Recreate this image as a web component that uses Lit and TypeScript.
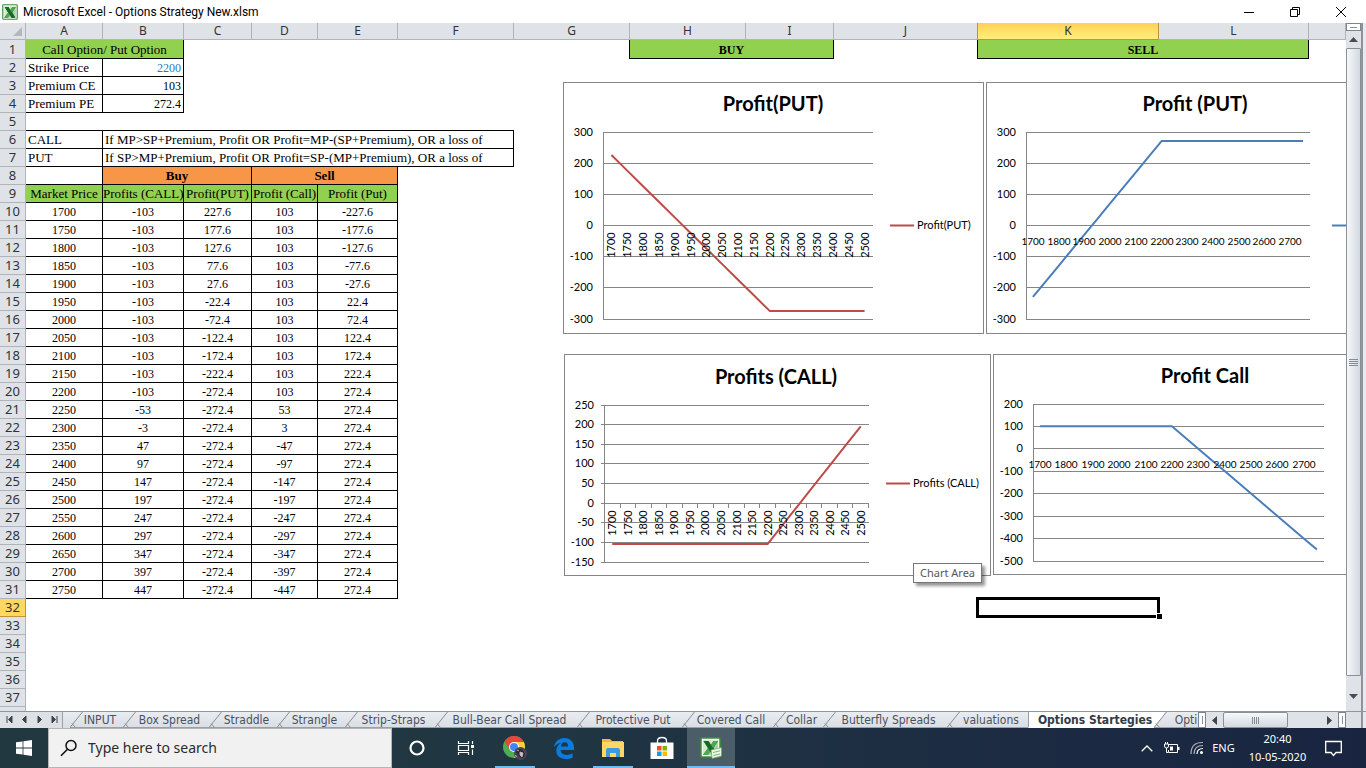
import { LitElement, html, svg, css, nothing, TemplateResult } from "lit";
import { customElement, property } from "lit/decorators.js";
import { classMap } from "lit/directives/class-map.js";

const COLUMNS: [string, number][] = [
  ["A", 77], ["B", 81], ["C", 68], ["D", 66], ["E", 80], ["F", 116], ["G", 116],
  ["H", 116], ["I", 88], ["J", 144], ["K", 181], ["L", 150], ["", 0],
];

const STRIKE = 2200;
const CE = 103;
const PE = 272.4;
const round = (n: number) => Math.round(n * 10) / 10;
const buyCall = (mp: number) => (mp > STRIKE ? mp - STRIKE - CE : -CE);
const buyPut = (mp: number) => (mp < STRIKE ? round(STRIKE - mp - PE) : -PE);
const sellPut = (mp: number) => (mp >= STRIKE ? PE : round(Math.abs(mp - STRIKE + PE)));
const range = (from: number, to: number, step: number) => {
  const out: number[] = [];
  for (let v = from; v <= to; v += step) out.push(v);
  return out;
};
const PRICES = range(1700, 2750, 50);

interface Cell {
  text?: string | number;
  span?: number;
  cls?: string;
  selected?: boolean;
}

function rowCells(n: number): Cell[] {
  switch (n) {
    case 1:
      return [
        { text: "Call Option/ Put Option", span: 2, cls: "box green center" },
        { span: 5, cls: "edge" },
        { text: "BUY", span: 2, cls: "box green center bold num" },
        { cls: "edge" },
        { text: "SELL", span: 2, cls: "box green center bold num" },
        {},
      ];
    case 2:
      return [{ text: "Strike Price", cls: "box" }, { text: STRIKE, cls: "box num right blue" }, { span: 11 }];
    case 3:
      return [{ text: "Premium CE", cls: "box" }, { text: CE, cls: "box num right" }, { span: 11 }];
    case 4:
      return [{ text: "Premium PE", cls: "box" }, { text: PE, cls: "box num right" }, { span: 11 }];
    case 5:
      return [{ span: 6, cls: "under" }, { span: 7 }];
    case 6:
      return [
        { text: "CALL", cls: "box" },
        { text: "If MP>SP+Premium, Profit OR Profit=MP-(SP+Premium), OR a loss of", span: 5, cls: "box" },
        { span: 7 },
      ];
    case 7:
      return [
        { text: "PUT", cls: "box" },
        { text: "If SP>MP+Premium, Profit OR Profit=SP-(MP+Premium), OR a loss of", span: 5, cls: "box" },
        { span: 7 },
      ];
    case 8:
      return [
        { cls: "box" },
        { text: "Buy", span: 2, cls: "box orange center bold" },
        { text: "Sell", span: 2, cls: "box orange center bold" },
        { span: 8 },
      ];
    case 9:
      return [
        ...["Market Price", "Profits (CALL)", "Profit(PUT)", "Profit (Call)", "Profit (Put)"].map((text) => ({
          text,
          cls: "box green center tight",
        })),
        { span: 8 },
      ];
    case 32:
      return [{ span: 10 }, { selected: true }, { span: 2 }];
  }
  if (n >= 10 && n <= 31) {
    const mp = PRICES[n - 10];
    const put = mp < 1950 ? -buyPut(mp) : sellPut(mp);
    return [
      ...[mp, buyCall(mp), buyPut(mp), -buyCall(mp), put].map((text) => ({ text, cls: "box num center" })),
      { span: 8 },
    ];
  }
  return [{ span: 13 }];
}

interface ChartSpec {
  id: string;
  title: string;
  titleX: number;
  titleY: number;
  w: number;
  h: number;
  plot: [number, number, number, number];
  max: number;
  min: number;
  step: number;
  prices: number[];
  labelEvery: number;
  labelY: number;
  rotate: boolean;
  ticks: boolean;
  color: string;
  legend?: string;
  legendX: number;
  legendY: number;
  value: (mp: number) => number;
}

const CHARTS: ChartSpec[] = [
  {
    id: "put-buy", title: "Profit(PUT)", titleX: 210, titleY: 29, w: 421, h: 252,
    plot: [40, 50, 269, 187], max: 300, min: -300, step: 100,
    prices: range(1700, 2500, 50), labelEvery: 1, labelY: 163, rotate: true, ticks: false,
    color: "#be4b48", legend: "Profit(PUT)", legendX: 327, legendY: 143, value: buyPut,
  },
  {
    id: "put-sell", title: "Profit (PUT)", titleX: 209, titleY: 29, w: 421, h: 252,
    plot: [40, 50, 283, 187], max: 300, min: -300, step: 100,
    prices: PRICES, labelEvery: 2, labelY: 163, rotate: false, ticks: false,
    color: "#4a7ebb", legendX: 346, legendY: 143, value: (mp) => -buyPut(mp),
  },
  {
    id: "call-buy", title: "Profits (CALL)", titleX: 212, titleY: 30, w: 427, h: 222,
    plot: [40, 51, 264, 157], max: 250, min: -150, step: 50,
    prices: range(1700, 2500, 50), labelEvery: 1, labelY: 169, rotate: true, ticks: true,
    color: "#be4b48", legend: "Profits (CALL)", legendX: 322, legendY: 129, value: buyCall,
  },
  {
    id: "call-sell", title: "Profit Call", titleX: 212, titleY: 29, w: 421, h: 221,
    plot: [40, 50, 290, 157], max: 200, min: -500, step: 100,
    prices: PRICES, labelEvery: 2, labelY: 114, rotate: false, ticks: false,
    color: "#4a7ebb", legendX: 360, legendY: 130, value: (mp) => -buyCall(mp),
  },
];

@customElement("profit-chart")
class ProfitChart extends LitElement {
  @property({ attribute: false }) spec!: ChartSpec;

  static styles = css`
    :host { display: block; background: #fff; }
    svg { display: block; font-family: Lato, "Liberation Sans", sans-serif; }
    .frame { fill: #fff; stroke: #868686; }
    .grid { stroke: #868686; shape-rendering: crispEdges; fill: none; }
    .line { fill: none; stroke-width: 2; stroke-linejoin: round; }
    .title { font-size: 20px; font-weight: 700; text-anchor: middle; }
    .label { font-size: 11px; }
    .small { font-size: 10px; }
    .end { text-anchor: end; }
    .mid { text-anchor: middle; }
  `;

  render() {
    const s = this.spec;
    const [px, py, pw, ph] = s.plot;
    const y = (v: number) => py + ((s.max - v) * ph) / (s.max - s.min);
    const slot = pw / s.prices.length;
    const x = (i: number) => px + slot * (i + 0.5) + 0.5;
    const points = s.prices.map((p, i) => `${x(i)},${y(s.value(p)) + 0.5}`).join(" ");
    return html`<svg width=${s.w} height=${s.h} role="img" aria-label=${s.title}>
      <rect class="frame" x="0.5" y="0.5" width=${s.w - 1} height=${s.h - 1}></rect>
      <text class="title" x=${s.titleX} y=${s.titleY}>${s.title}</text>
      ${range(s.min, s.max, s.step).map((v) => {
        const gy = Math.floor(y(v)) + 0.5;
        return svg`<path class="grid" d="M${px - (s.ticks ? 3 : 0)} ${gy}H${px + pw + 1}"></path>
          <text class="label end" x="30" y=${Math.floor(y(v)) + 4}>${v}</text>`;
      })}
      <path class="grid" d="M${px + 0.5} ${py}V${py + ph + 1}"></path>
      ${s.ticks
        ? s.prices.map((_, i) => svg`<path class="grid" d="M${Math.round(px + slot * (i + 1)) + 0.5} ${Math.floor(y(0))}v5"></path>`)
        : nothing}
      <polyline class="line" points=${points} stroke=${s.color}></polyline>
      ${s.prices.map((p, i) =>
        i % s.labelEvery
          ? nothing
          : s.rotate
            ? svg`<text class="label mid" transform="translate(${Math.round(x(i)) + 4} ${s.labelY}) rotate(-90)">${p}</text>`
            : svg`<text class="label small mid" x=${Math.round(x(i))} y=${s.labelY}>${p}</text>`,
      )}
      <path class="line" stroke=${s.color} d="M${s.legendX} ${s.legendY + 0.5}h24"></path>
      ${s.legend ? svg`<text class="label" x=${s.legendX + 27} y=${s.legendY + 4}>${s.legend}</text>` : nothing}
    </svg>`;
  }
}

const TABS: [string, number][] = [
  ["INPUT", 53], ["Box Spread", 86], ["Straddle", 68], ["Strangle", 68], ["Strip-Straps", 90],
  ["Bull-Bear Call Spread", 142], ["Protective Put", 105], ["Covered Call", 91], ["Collar", 50],
  ["Butterfly Spreads", 124], ["valuations", 81], ["Options Startegies", 126], ["Opti", 57],
];
const ACTIVE = "Options Startegies";

@customElement("sheet-view")
class SheetView extends LitElement {
  static styles = css`
    :host { display: flex; flex: 1; min-height: 0; overflow: hidden; background: #fff; }
    .canvas { position: relative; flex: 1; min-width: 0; overflow: hidden; }
    table { width: 100%; table-layout: fixed; border-collapse: separate; border-spacing: 0; }
    .rowhead { width: 26px; }
    th {
      box-sizing: border-box; height: 18px; padding: 0; font: 13px/17px "Noto Sans", sans-serif;
      color: #2f3337; background: #dfe3e8; text-align: center; overflow: hidden;
      border-right: 1px solid #b0b4b9; border-bottom: 1px solid #b0b4b9;
    }
    thead th { height: 17px; font-size: 12px; line-height: 16px; }
    .corner svg { display: block; margin-left: 13px; }
    .colsel { background: linear-gradient(#ffd058, #fff07a); border-color: #c4913c; }
    .before-sel { border-right-color: #c4913c; }
    .rowsel { background: #ffd861; border-color: #c4913c; }
    td {
      box-sizing: border-box; height: 18px; padding: 1px 2px 0; white-space: nowrap;
      font: 13px/16px "Liberation Serif", serif; color: #000;
    }
    .first td, .first th { height: 19px; }
    .box { border-right: 1px solid #000; border-bottom: 1px solid #000; overflow: hidden; }
    .edge { border-right: 1px solid #000; }
    .under { border-bottom: 1px solid #000; }
    .green { background: #92d050; }
    .orange { background: #f79646; }
    .center { text-align: center; }
    .right { text-align: right; }
    .bold { font-weight: 700; }
    .num { font-size: 12px; }
    .tight { padding: 1px 0 0; }
    .blue { color: #1f7ac4; }
    .selcell { position: relative; }
    .selection { position: absolute; inset: -2px -1px -1px -2px; border: 3px solid #000; }
    .handle {
      position: absolute; right: -5px; bottom: -4px; width: 5px; height: 5px;
      background: #000; border: 1px solid #fff; border-right: 0; border-bottom: 0;
    }
    profit-chart, .tip { position: absolute; }
    .put-buy { left: 563px; top: 59px; }
    .put-sell { left: 986px; top: 59px; }
    .call-buy { left: 564px; top: 331px; }
    .call-sell { left: 993px; top: 331px; }
    .tip {
      left: 913px; top: 540px; padding: 0 6px; font: 11px/18px "Noto Sans", sans-serif; color: #575757;
      background: #fffffff0; border: 1px solid #767676; box-shadow: 3px 3px 3px #0000006b;
    }
    .scroll {
      display: flex; flex-direction: column; align-items: center; width: 15px;
      background: #dfe3e8; border-right: 2px solid #8e939c;
    }
    .frame { width: 3px; background: #e8e8f0; }
    .split {
      box-sizing: border-box; width: 15px; height: 8px; border: 1px solid #7f858f;
      background: linear-gradient(#8a8f99, #8a8f99) center / 7px 1px no-repeat #fff;
    }
    button { border: 0; padding: 0; background: none; display: grid; place-items: center; width: 15px; height: 17px; }
    .thumb {
      box-sizing: border-box; flex: 1; width: 15px; border: 1px solid #8a909a; border-radius: 1px;
      background: linear-gradient(90deg, #f6f8fa, #d3d9e1); display: grid; place-items: center;
    }
    .low { height: 35px; padding-top: 18px; align-items: start; }
  `;

  render() {
    return html`
      <div class="canvas">
        <table>
          <colgroup>
            <col class="rowhead" />
            ${COLUMNS.map(([, w]) => (w ? html`<col style="width:${w}px" />` : html`<col />`))}
          </colgroup>
          <thead>
            <tr>
              <th class="corner"><svg width="9" height="9"><path d="M9 0V9H0z" fill="#b3b8be" /></svg></th>
              ${COLUMNS.map(
                ([name]) => html`<th scope="col" class=${classMap({ colsel: name === "K", "before-sel": name === "J" })}>${name}</th>`,
              )}
            </tr>
          </thead>
          <tbody>
            ${range(1, 38, 1).map(
              (n) => html`<tr class=${n === 1 ? "first" : ""}>
                <th scope="row" class=${n === 32 ? "rowsel" : ""}>${n < 38 ? n : nothing}</th>
                ${rowCells(n).map((c) => this.cell(c))}
              </tr>`,
            )}
          </tbody>
        </table>
        ${CHARTS.map((c) => html`<profit-chart class=${c.id} .spec=${c}></profit-chart>`)}
        <div class="tip" role="tooltip">Chart Area</div>
      </div>
      <div class="scroll">
        <div class="split"></div>
        <button aria-label="Scroll up"><svg width="9" height="5"><path d="M0 5L4.500 0L9 5z" fill="#4a4d52" /></svg></button>
        <div class="thumb">
          <svg width="9" height="7"><path d="M0 .5H9M0 2.500H9M0 4.500H9M0 6.500H9" stroke="#868c95" /></svg>
        </div>
        <button class="low" aria-label="Scroll down">
          <svg width="9" height="5"><path d="M0 0H9L4.500 5z" fill="#4a4d52" /></svg>
        </button>
      </div>
      <div class="frame"></div>
    `;
  }

  private cell(c: Cell): TemplateResult {
    if (c.selected) {
      return html`<td class="selcell"><div class="selection"><span class="handle"></span></div></td>`;
    }
    return html`<td class=${c.cls ?? ""} colspan=${c.span ?? 1}>${c.text ?? nothing}</td>`;
  }
}

@customElement("sheet-tabs")
class SheetTabs extends LitElement {
  static styles = css`
    :host {
      display: flex; height: 17px; box-sizing: border-box; background: #dde1e6;
      border-top: 1px solid #8f959d; font: 12px/17px "DejaVu Sans Condensed", "Noto Sans", sans-serif;
    }
    button { border: 0; padding: 0; background: none; font: inherit; color: #4a5260; }
    .nav { display: flex; width: 63px; box-sizing: border-box; padding-left: 2px; border-right: 1px solid #9aa0a8; }
    .nav button { width: 15px; padding-bottom: 2px; display: grid; place-items: center; }
    .tabs { display: flex; flex: 1; min-width: 0; overflow: hidden; padding-left: 7px; background: linear-gradient(#e9ecf0, #d9dee4); }
    .tab {
      flex: none; box-sizing: border-box; display: flex; position: relative; padding-left: 10px; padding-right: 3px;
      justify-content: center; white-space: nowrap; border-bottom: 1px solid #9aa0a8;
    }
    .tab svg { position: absolute; left: 0; top: 0; }
    .active { font-weight: 700; color: #333b47; background: #fff; border-bottom-color: #fff; border-left: 1px solid #9aa0a8; }
    .after { background: linear-gradient(128deg, #fff 10px, #0000 10px); }
    .hs { display: flex; width: 148px; flex: none; background: #dfe3e8; }
    .split { box-sizing: border-box; width: 8px; border: 1px solid #7f858f; background: linear-gradient(#8a8f99, #8a8f99) center / 1px 8px no-repeat #fff; }
    .arrow { width: 17px; display: grid; place-items: center; }
    .track { flex: 1; display: flex; }
    .thumb {
      box-sizing: border-box; width: 65px; border: 1px solid #8a909a; border-radius: 2px;
      background: linear-gradient(#f6f8fa, #d3d9e1); display: grid; place-items: center;
    }
    .corner { width: 15px; border-right: 2px solid #8e939c; }
    .frame { width: 3px; background: #e8e8f0; }
  `;

  render() {
    const navs = [
      ["First sheet", "M1 0V7M6 0V7L2.500 3.500z"],
      ["Previous sheet", "M5 0V7L1.500 3.500z"],
      ["Next sheet", "M2 0V7L5.500 3.500z"],
      ["Last sheet", "M1 0V7L4.500 3.500zM6 0V7"],
    ];
    return html`
      <div class="nav">
        ${navs.map(
          ([label, d]) => html`<button aria-label=${label}>
            <svg width="7" height="7"><path d=${d} fill="#3f434a" stroke="#3f434a" stroke-width="1" /></svg>
          </button>`,
        )}
      </div>
      <div class="tabs" role="tablist">
        ${TABS.map(
          ([name, w], i) => html`<button
            role="tab"
            class=${classMap({ tab: true, active: name === ACTIVE, after: TABS[i - 1]?.[0] === ACTIVE })}
            style="width:${w}px"
          >
            ${name === ACTIVE
              ? nothing
              : html`<svg width="13" height="16"><path d="M0 15.500L12.500 0M2 11.500L5.500 15.500" fill="none" stroke="#868c95" /></svg>`}
            ${name}
          </button>`,
        )}
      </div>
      <div class="hs">
        <div class="split"></div>
        <button class="arrow" aria-label="Scroll left"><svg width="5" height="9"><path d="M5 0V9L0 4.500z" fill="#3f434a" /></svg></button>
        <div class="track">
          <div class="thumb"><svg width="8" height="7"><path d="M.5 0V7M2.500 0V7M4.500 0V7M6.500 0V7" stroke="#868c95" /></svg></div>
        </div>
        <button class="arrow" aria-label="Scroll right"><svg width="5" height="9"><path d="M0 0V9L5 4.500z" fill="#3f434a" /></svg></button>
        <div class="split"></div>
      </div>
      <div class="corner"></div>
      <div class="frame"></div>
    `;
  }
}

const excelIcon = svg`
  <rect x="1" y="1" width="19" height="19" rx="1" fill="#f4faf2" stroke="#3c8f3d" stroke-width="1.500" />
  <path d="M3 3h15v15H3z" fill="#d3ebcd" />
  <path d="M3 18L18 3V18z" fill="#a9d7a2" />
  <path d="M3.500 4h5l2.500 4.500L13.500 4H18l-4.500 7L17.500 18h-5l-2.500-4.500L7.500 18H3L8 11z" fill="#1f7a33" />
  <path d="M13.500 4H18L8 18H3z" fill="#4fa84f" />
  <path d="M3.500 4h5l9 14h-5z" fill="#17682b" />`;

@customElement("task-bar")
class TaskBar extends LitElement {
  static styles = css`
    :host {
      display: flex; height: 40px; color: #fff; font: 11px/18px "Noto Sans", sans-serif;
      background: linear-gradient(90deg, #213840 0%, #203642 40%, #1c2c42 70%, #192540 100%);
    }
    button { border: 0; padding: 0; background: none; color: inherit; font: inherit; display: grid; place-items: center; }
    .start, .app { width: 48px; position: relative; }
    .search {
      display: flex; align-items: center; box-sizing: border-box; width: 344px; padding-left: 11px; gap: 10px;
      background: #f1f1f1; border: 1px solid #b5b5b5;
    }
    .search input {
      flex: 1; min-width: 0; border: 0; padding: 0; background: none; outline: 0;
      font: 14px/20px "Noto Sans", sans-serif; color: #222;
    }
    .search input::placeholder { color: #2b2b2b; opacity: 1; }
    .apps { display: flex; flex: 1; gap: 1px; padding-left: 1px; }
    .open::after { content: ""; position: absolute; left: 4px; right: 4px; bottom: 0; height: 2px; background: #76b9ed; }
    .current { background: #4b5d67; }
    .current::after { left: 0; right: 0; }
    .tray { display: flex; align-items: center; }
    .tray button { height: 40px; width: 25px; }
    .tray .lang { width: 29px; }
    .tray .clock { width: 79px; align-content: center; }
    .tray .note { width: 32px; margin-right: 17px; }
  `;

  render() {
    return html`
      <button class="start" aria-label="Start">
        <svg width="16" height="16" fill="#fff"><path d="M0 2.300L6.600 1.400V7.600H0zM7.400 1.300L16 0V7.600H7.400zM0 8.400H6.600V14.600L0 13.700zM7.400 8.400H16V16L7.400 14.700z" /></svg>
      </button>
      <label class="search">
        <svg width="18" height="18" fill="none" stroke="#111" stroke-width="1.500"><circle cx="11" cy="6.500" r="5" /><path d="M7.500 10.200L1 16.800" /></svg>
        <input type="text" placeholder="Type here to search" aria-label="Type here to search" />
      </label>
      <div class="apps">
        <button class="app" aria-label="Cortana"><svg width="18" height="18"><circle cx="9" cy="9" r="6.500" fill="none" stroke="#fff" stroke-width="2.200" /></svg></button>
        <button class="app" aria-label="Task View">
          <svg width="18" height="16" fill="none" stroke="#fff" stroke-width="1.200">
            <path d="M1.500 1V3.500H11.500V1M1.500 15V12.500H11.500V15M1.500 5.500H11.500V10.500H1.500zM15.500 1V4M15.500 9.500V15" /><path d="M14 5h3v3h-3z" fill="#fff" stroke="none" />
          </svg>
        </button>
        <button class="app open" aria-label="Google Chrome">
          <svg width="26" height="26" viewBox="0 0 26 26">
            <circle cx="12" cy="12" r="11" fill="#4caf50" />
            <path d="M12 12L2.500 6.500A11 11 0 0 1 21.800 7H12z" fill="#e8453c" />
            <path d="M12 7H21.800A11 11 0 0 1 12 23L16.500 14.500z" fill="#fdd23c" />
            <path d="M2.500 6.500L7.500 14.500L12 12z" fill="#e8453c" />
            <circle cx="12" cy="12" r="5" fill="#fff" /><circle cx="12" cy="12" r="4" fill="#4285f4" />
            <circle cx="18.500" cy="18.500" r="6.500" fill="#4a4452" /><path d="M14 17q4-6 8 0q2 4-2 6q-4-2-6-6z" fill="#2a2634" />
            <path d="M18 17l3 1-1 4-2-2zM13 20l2 2M15 15l2 1" fill="#d9c3c4" stroke="#b9aebb" />
          </svg>
        </button>
        <button class="app" aria-label="Microsoft Edge">
          <svg width="20" height="21" viewBox="0 0 20 21"><path fill="#0a7ce0" d="M0 9.300C.8 3.600 4.800 0 10.500 0 16.300 0 20 4 20 9.600V12H6.600c.2 3.400 2.800 4.900 6 4.900 2.300 0 4.200-.6 6-1.700v4.300c-2 1.100-4.300 1.500-6.800 1.500C6 21 2.300 17.800 2.300 12.600c0-3.600 2-6.600 5.300-8.200C4.200 5 1.600 6.800 0 9.300zM6.900 8.400h7.200c0-2.500-1.200-4.100-3.500-4.100-2.100 0-3.500 1.800-3.700 4.100z" /></svg>
        </button>
        <button class="app open" aria-label="File Explorer">
          <svg width="22" height="20"><path d="M0 1H8L10 3H21V19H0z" fill="#f5b93a" /><path d="M0 4H22V19H0z" fill="#ffd766" /><path d="M4 19V12Q4 10 6 10H16Q18 10 18 12V19H14V15H8V19z" fill="#3f9be0" /></svg>
        </button>
        <button class="app" aria-label="Microsoft Store">
          <svg width="24" height="24"><path d="M7.500 8V5Q7.500 1.500 12 1.500T16.500 5V8" fill="none" stroke="#fff" stroke-width="1.300" /><path d="M.5 6.500H23.500V23H.5z" fill="#fff" /><path d="M7 10h4.500v4.500H7z" fill="#f25022" /><path d="M12.500 10H17v4.500h-4.500z" fill="#7fba00" /><path d="M7 15.500h4.500V20H7z" fill="#00a4ef" /><path d="M12.500 15.500H17V20h-4.500z" fill="#ffb900" /></svg>
        </button>
        <button class="app open current" aria-label="Microsoft Excel">
          <svg width="22" height="22">${excelIcon}<path d="M11 13L21.500 10.500V19L12 21.500z" fill="#eef6ec" stroke="#5da65a" stroke-width=".7" /><path d="M13 15.500l7-1.700M13.300 18.500l6.700-1.500" stroke="#7fb77b" /></svg>
        </button>
      </div>
      <div class="tray">
        <button aria-label="Show hidden icons"><svg width="12" height="7"><path d="M.7 6.300L6 1L11.300 6.300" fill="none" stroke="#fff" stroke-width="1.300" /></svg></button>
        <button aria-label="Battery">
          <svg width="17" height="12" fill="none" stroke="#fff"><path d="M6 2.500H14.500V10.500H5.500V8M1.500 2H5.500V4Q5.500 6 3.500 6Q1.500 6 1.500 4zM2.500 0V2M4.500 0V2M3.500 6V10.500H5" /><path d="M15 5h1.500v3H15zM7 4.500h3v4H7z" fill="#fff" stroke="none" /></svg>
        </button>
        <button aria-label="Network">
          <svg width="14" height="14" fill="none" stroke="#a9b0bd" stroke-width="1.200"><path d="M1 13Q1 1 13 1.500M4 13Q4 4.500 13 4.500" /><path d="M7 13Q7 7.500 13 7.500" stroke="#fff" /><circle cx="11.500" cy="11.500" r="1.500" fill="#fff" stroke="none" /></svg>
        </button>
        <button class="lang">ENG</button>
        <button class="clock"><span>20:40</span><span>10-05-2020</span></button>
        <button class="note" aria-label="Notifications"><svg width="17" height="17"><path d="M.7 1.500H16.300V12.500H11L8.500 15.500L6 12.500H.7z" fill="none" stroke="#fff" stroke-width="1.300" /></svg></button>
      </div>
    `;
  }
}

@customElement("app-root")
class AppRoot extends LitElement {
  static styles = css`
    :host { display: flex; flex-direction: column; height: 100vh; overflow: hidden; background: #fff; }
    .title { display: flex; align-items: center; height: 23px; flex: none; padding-left: 2px; font-family: Roboto, "Noto Sans", sans-serif; }
    h1 { flex: 1; margin: 0; padding-left: 5px; font-size: 12px; line-height: 20px; font-weight: 400; color: #000; }
    button { width: 46px; height: 20px; border: 0; padding: 0; background: none; display: grid; place-items: center; }
    .controls { display: flex; padding-right: 2px; }
    sheet-tabs, task-bar { flex: none; }
  `;

  render() {
    return html`
      <header class="title">
        <svg width="16" height="16" viewBox="0 0 21 21">${excelIcon}</svg>
        <h1>Microsoft Excel - Options Strategy New.xlsm</h1>
        <div class="controls">
          <button aria-label="Minimize"><svg width="10" height="10"><path d="M0 5.500H10" stroke="#000" /></svg></button>
          <button aria-label="Restore"><svg width="10" height="10"><path d="M.5 2.500H7.500V9.500H.5zM2.500 2.500V.5H9.500V7.500H7.500" fill="none" stroke="#000" /></svg></button>
          <button aria-label="Close"><svg width="10" height="10"><path d="M0 0L10 10M10 0L0 10" stroke="#000" /></svg></button>
        </div>
      </header>
      <sheet-view></sheet-view>
      <sheet-tabs></sheet-tabs>
      <task-bar></task-bar>
    `;
  }
}
